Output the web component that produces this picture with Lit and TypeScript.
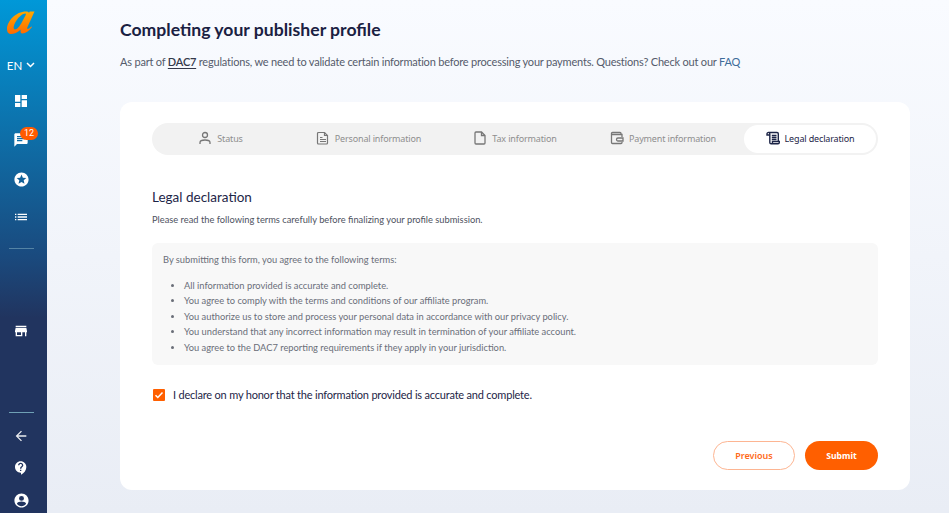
import { LitElement, html, css, svg } from "lit";
import { customElement } from "lit/decorators.js";

const mi = (d: string, size = 16) => html`<svg width=${size} height=${size} viewBox="0 0 24 24" fill="currentColor">${svg`<path d=${d}></path>`}</svg>`;

const ICONS = {
  dash: "M3 13h8V3H3v10zm0 8h8v-6H3v6zm10 0h8V11h-8v10zm0-18v6h8V3h-8z",
  chat: "M20 2H4c-1.1 0-2 .9-2 2v18l4-4h14c1.1 0 2-.9 2-2V4c0-1.1-.9-2-2-2zM6 9h12v2H6V9zm8 5H6v-2h8v2zm4-6H6V6h12v2z",
  star: "M12 2C6.5 2 2 6.5 2 12s4.5 10 10 10 10-4.5 10-10S17.500 2 12 2zm4.200 16L12 15.500 7.800 18l1.100-4.800-3.700-3.200 4.900-.4L12 5l1.900 4.600 4.900.4-3.700 3.200 1.100 4.800z",
  list: "M3 13h2v-2H3v2zm0 4h2v-2H3v2zm0-8h2V7H3v2zm4 4h14v-2H7v2zm0 4h14v-2H7v2zM7 7v2h14V7H7z",
  store: "M20 4H4v2h16V4zm1 10v-2l-1-5H4l-1 5v2h1v6h10v-6h4v6h2v-6h1zm-9 4H6v-4h6v4z",
  back: "M20 11H7.830l5.590-5.590L12 4l-8 8 8 8 1.410-1.410L7.830 13H20v-2z",
  help: "M11.500 2C6.800 2 3 5.800 3 10.500S6.800 19 11.500 19h.5v3c4.900-2.300 8-7 8-11.500C20 5.800 16.200 2 11.500 2zm1 14.500h-2v-2h2v2zm0-3.500h-2c0-3.200 3-3 3-5 0-1.100-.9-2-2-2s-2 .9-2 2h-2c0-2.200 1.800-4 4-4s4 1.800 4 4c0 2.500-3 2.800-3 5z",
  account: "M12 2C6.480 2 2 6.480 2 12s4.480 10 10 10 10-4.480 10-10S17.520 2 12 2zm0 3.500a3.500 3.500 0 1 1 0 7 3.500 3.500 0 0 1 0-7zM12 20c-2.700 0-5.100-1.300-6.500-3.400C5.600 14.500 9.700 13.400 12 13.400s6.400 1.100 6.500 3.200C17.100 18.700 14.700 20 12 20z",
};

const tabIcon = (name: string) => {
  switch (name) {
    case "status":
      return html`<svg width="14" height="14" viewBox="0 0 14 14" fill="none" stroke="currentColor" stroke-width="1.300"><circle cx="7" cy="4" r="2.500"></circle><path d="M2 13v-1.500C2 9.800 3.500 9 7 9s5 .8 5 2.500V13"></path></svg>`;
    case "personal":
      return html`<svg width="14" height="14" viewBox="0 0 14 14" fill="none" stroke="currentColor" stroke-width="1.200"><path d="M2.500 1.500h6l3 3v7.500a1 1 0 0 1-1 1h-8a1 1 0 0 1-1-1v-9.500a1 1 0 0 1 1-1z"></path><path d="M4 6.500h2.500M4 8.500h6M4 10.500h6M8.500 1.500v3h3"></path></svg>`;
    case "tax":
      return html`<svg width="14" height="14" viewBox="0 0 14 14" fill="none" stroke="currentColor" stroke-width="1.300"><path d="M3 1h5.500L12 4.500V12a1 1 0 0 1-1 1H3a1 1 0 0 1-1-1V2a1 1 0 0 1 1-1z"></path><path d="M8.500 1v3.500H12"></path></svg>`;
    case "payment":
      return html`<svg width="14" height="14" viewBox="0 0 14 14" fill="none" stroke="currentColor" stroke-width="1.300"><path d="M11 3V2.500a1 1 0 0 0-1-1H2.500a1 1 0 0 0-1 1V11.500a1 1 0 0 0 1 1H11a1 1 0 0 0 1-1V11"></path><path d="M1.500 3.500H12V6M8 7h5v3H8a1.500 1.500 0 0 1 0-3z"></path></svg>`;
    default:
      return html`<svg width="14" height="14" viewBox="0 0 14 14" fill="none" stroke="currentColor" stroke-width="1.400"><path d="M3 1.500h8a1.300 1.300 0 0 1 1.300 1.300V10.500M3 1.500A1.500 1.500 0 0 0 1 3v1h2.500M3 1.500c.5.300.8.800.8 1.500v8.500c0 .8.600 1.300 1.300 1.300h6.900c.8 0 1.300-.6 1.300-1.300v-1H6.500v1c0 .8-.5 1.300-1.300 1.300"></path><path d="M5.800 4.500h4.700M5.800 6.500h4.700M5.800 8.500h4.700"></path></svg>`;
  }
};

const TERMS = [
  "All information provided is accurate and complete.",
  "You agree to comply with the terms and conditions of our affiliate program.",
  "You authorize us to store and process your personal data in accordance with our privacy policy.",
  "You understand that any incorrect information may result in termination of your affiliate account.",
  "You agree to the DAC7 reporting requirements if they apply in your jurisdiction.",
];

const TABS = [
  ["status", "Status"],
  ["personal", "Personal information"],
  ["tax", "Tax information"],
  ["payment", "Payment information"],
  ["legal", "Legal declaration"],
];

@customElement("app-root")
export class AppRoot extends LitElement {
  static styles = css`
    :host { display: flex; width: 100%; height: 513px; overflow: hidden; font-family: Lato, "Liberation Sans", sans-serif; background: linear-gradient(180deg, #f9fbff 0%, #e9edf5 100%); }
    .side { width: 47px; height: 513px; flex: none; box-sizing: border-box; padding-right: 5px; background: linear-gradient(180deg, #0098d8 0%, #1a4a7e 50%, #21345f 62%, #21345f 100%); color: #fff; display: flex; flex-direction: column; align-items: center; position: relative; }
    .logo { display: block; margin: 11px 0 0 0; flex: none; }
    .lang { margin-top: 23px; height: 16px; display: flex; align-items: center; gap: 4px; font-size: 11.500px; font-weight: 400; }
    .ni { height: 18px; display: flex; align-items: center; justify-content: center; position: relative; width: 42px; }
    .dash { margin-top: 19px; } .chat { margin-top: 21px; } .star { margin-top: 21px; } .list { margin-top: 20px; }
    .rule { width: 25px; height: 1px; background: #6e9bb5; }
    .r1 { margin-top: 22px; opacity: .7; }
    .store { margin-top: 73px; }
    .spacer { flex: 1; }
    .r2 { margin-bottom: 14px; background: #6fa0b5; }
    .back { margin-bottom: 14px; opacity: .9; } .help { margin-bottom: 14px; } .acct { margin-bottom: 4px; }
    .badge { position: absolute; left: 20px; top: -4px; width: 18px; height: 13px; border-radius: 7px; background: #ff5a00; color: #fff; font-size: 9px; line-height: 13px; text-align: center; font-family: Roboto, sans-serif; }
    main { flex: 1; padding-left: 73px; }
    h1 { margin: 19px 0 0; font-size: 17.600px; line-height: 22px; font-weight: 700; color: #1a2142; }
    .sub { margin: 13px 0 0; font-size: 11px; letter-spacing: -.2px; line-height: 15px; color: #555b6b; white-space: nowrap; }
    .sub u { color: #33384a; font-weight: 600; text-underline-offset: 2px; }
    .sub a { color: #3e6c9a; }
    .card { margin-top: 33px; width: 790px; height: 388px; box-sizing: border-box; background: #fff; border-radius: 12px; padding: 21px 32px; }
    .tabs { display: grid; grid-template-columns: 137px 159px 134px 162px 132px; height: 32px; border-radius: 16px; background: #f2f2f2; padding-right: 2px; box-sizing: border-box; width: 726px; }
    .tab { display: flex; align-items: center; justify-content: center; gap: 5px; padding-bottom: 2px; box-sizing: border-box; font: 9px "Noto Sans", sans-serif; letter-spacing: -.15px; color: #8e8e8e; white-space: nowrap; }
    .tab svg { color: #777; flex: none; }
    .tab.on { background: #fff; color: #1d2547; border-radius: 14px; margin: 2px 0; }
    .tab.on svg { color: #1d2547; }
    h2 { margin: 34px 0 0; font-size: 13.500px; line-height: 17px; font-weight: 400; color: #1d2547; }
    .intro { margin: 8px 0 0; font-size: 9.300px; line-height: 12px; color: #4e5260; }
    .terms { margin-top: 17px; width: 726px; height: 122px; box-sizing: border-box; background: #f8f8f8; border-radius: 6px; padding: 11px; font-size: 9.300px; color: #6a6e78; }
    .terms p { margin: 0; line-height: 12px; }
    .terms ul { margin: 12px 0 0; padding-left: 21px; }
    .terms li { line-height: 15.400px; }
    .check { margin: 23px 0 0 1px; display: flex; align-items: center; gap: 8px; font-size: 11px; letter-spacing: -.2px; color: #1d2547; height: 13px; }
    .box { width: 12px; height: 12px; background: #ff5f00; border-radius: 1px; display: flex; align-items: center; justify-content: center; flex: none; }
    .btns { margin-top: 40px; display: flex; justify-content: flex-end; gap: 10px; }
    .btn { width: 82px; height: 29px; border-radius: 15px; box-sizing: border-box; display: flex; align-items: center; justify-content: center; font: 600 9px "Noto Sans", sans-serif; }
    .prev { border: 1px solid #fdb592; color: #ff6a1a; }
    .sub-btn { width: 73px; background: #ff5f00; color: #fff; font-weight: 700; font-size: 8.600px; }
  `;

  render() {
    return html`
      <nav class="side">
        <svg class="logo" width="28" height="23" viewBox="0 0 28 23" role="img" aria-label="logo">
          <defs><linearGradient id="lg" x1="0" y1="0" x2="0" y2="1"><stop offset="0" stop-color="#ffa800"></stop><stop offset="1" stop-color="#ff6a00"></stop></linearGradient></defs>
          <path fill="url(#lg)" fill-rule="evenodd" d="M27.500 .5L20.500 16C19.800 18 20.500 18.500 22 17.500L24.500 15.500L25 16C22 20 18.500 22.500 15.500 22.500C13.500 22.500 13.200 20.500 13.800 18.500C10.500 21.500 7 23 4 23C1 23 0 20.500 0 18C0 10 9 .5 19 .5C20.500 .5 21.500 1 22 1.800L22.800 .5ZM18.500 2.500C15 2.500 10.500 7 8 12C6.500 15 6 18 8 18.500C10 18.500 13 15 15 11C17 7 20 2.500 18.500 2.500Z"></path>
        </svg>
        <div class="lang">EN <svg width="9" height="6" viewBox="0 0 9 6" fill="none" stroke="#fff" stroke-width="1.500"><path d="M1 1l3.500 3.500L8 1"></path></svg></div>
        <div class="ni dash">${mi(ICONS.dash)}</div>
        <div class="ni chat">${mi(ICONS.chat)}<span class="badge">12</span></div>
        <div class="ni star">${mi(ICONS.star, 17)}</div>
        <div class="ni list">${mi(ICONS.list)}</div>
        <div class="rule r1"></div>
        <div class="ni store">${mi(ICONS.store)}</div>
        <div class="spacer"></div>
        <div class="rule r2"></div>
        <div class="ni back">${mi(ICONS.back)}</div>
        <div class="ni help">${mi(ICONS.help, 16)}</div>
        <div class="ni acct">${mi(ICONS.account, 17)}</div>
      </nav>
      <main>
        <h1>Completing your publisher profile</h1>
        <p class="sub">As part of <u>DAC7</u> regulations, we need to validate certain information before processing your payments. Questions? Check out our <a>FAQ</a></p>
        <section class="card">
          <div class="tabs">
            ${TABS.map(([k, t]) => html`<div class="tab ${k === "legal" ? "on" : ""}">${tabIcon(k)}<span>${t}</span></div>`)}
          </div>
          <h2>Legal declaration</h2>
          <p class="intro">Please read the following terms carefully before finalizing your profile submission.</p>
          <div class="terms">
            <p>By submitting this form, you agree to the following terms:</p>
            <ul>${TERMS.map((t) => html`<li>${t}</li>`)}</ul>
          </div>
          <label class="check">
            <span class="box"><svg width="10" height="10" viewBox="0 0 10 10" fill="none" stroke="#fff" stroke-width="1.500"><path d="M1.500 5.200l2.300 2.300 4.700-5"></path></svg></span>
            I declare on my honor that the information provided is accurate and complete.
          </label>
          <div class="btns"><div class="btn prev">Previous</div><div class="btn sub-btn">Submit</div></div>
        </section>
      </main>
    `;
  }
}
